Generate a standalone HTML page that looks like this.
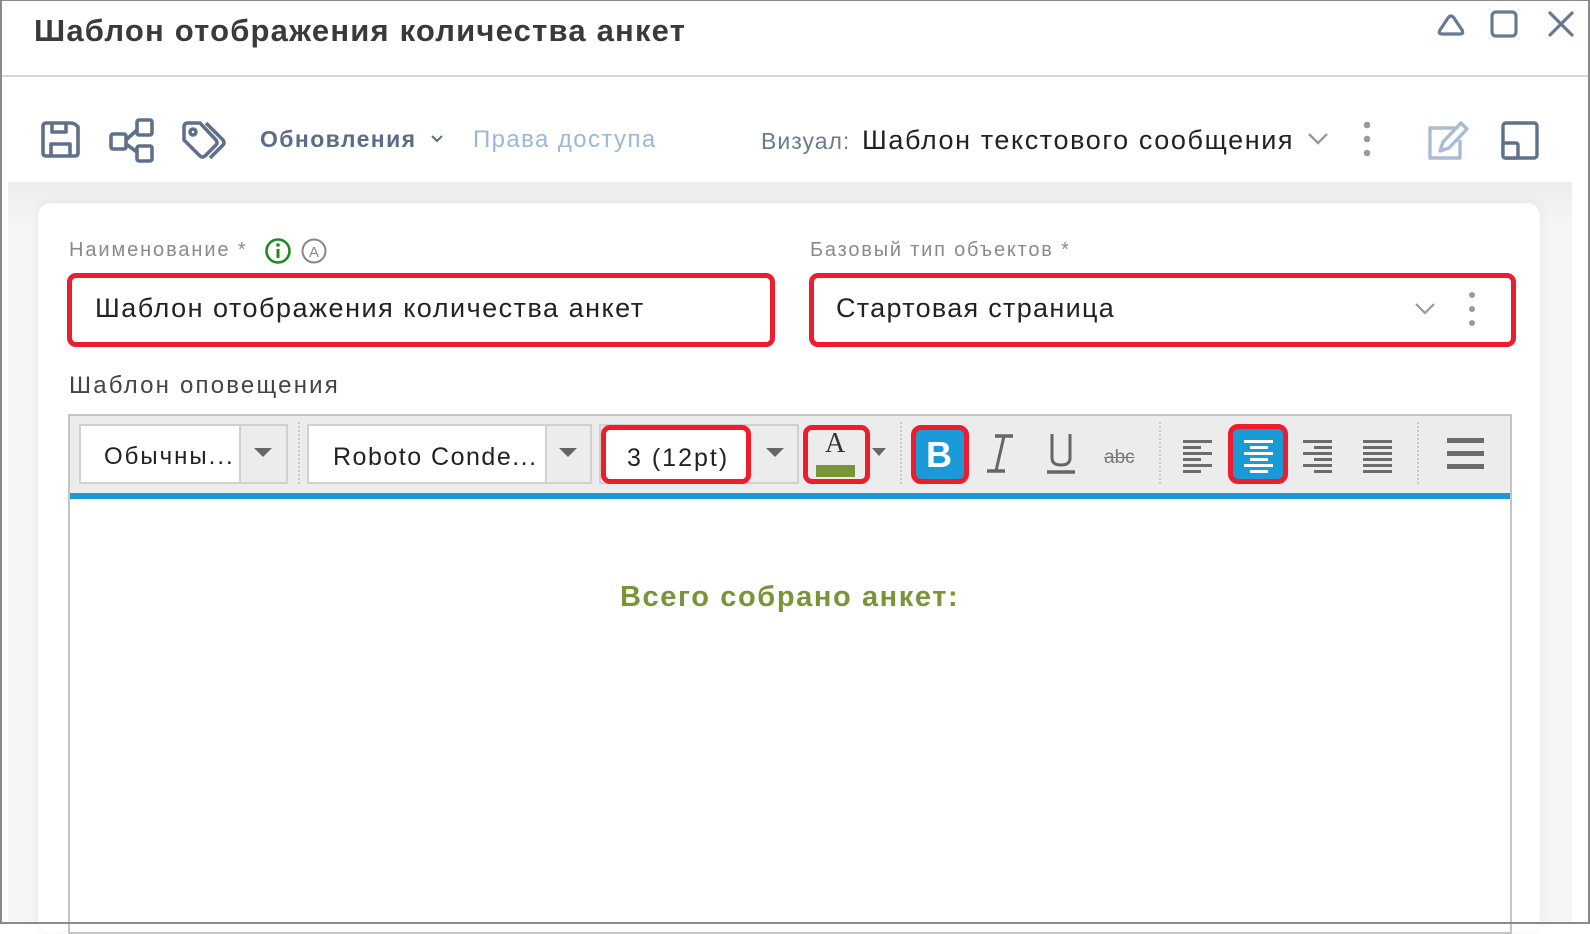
<!DOCTYPE html>
<html><head><meta charset="utf-8">
<style>
*{margin:0;padding:0;box-sizing:border-box}
body{width:1590px;height:924px;overflow:hidden;background:#fff;font-family:"Liberation Sans",sans-serif;position:relative}
.a{position:absolute}
.t{position:absolute;white-space:nowrap;line-height:1}
.frame{left:0;top:0;width:1590px;height:924px;border:2px solid #8a8a8a;border-top:1px solid #8a8a8a}
.rb{position:absolute;border:5px solid #ee1c2d;border-radius:9px}
.ln{position:absolute;height:3px;background:#6b6b6b}
.wl{position:absolute;height:3px;background:#fff}
</style></head><body>
<div class="t" style="left:34px;top:15px;font-size:31px;font-weight:bold;color:#3a3a3a;letter-spacing:1.2px">Шаблон отображения количества анкет</div>
<svg class="a" style="left:1430px;top:8px" width="150" height="34" viewBox="0 0 150 34" fill="none" stroke="#667a92" stroke-width="3.2" stroke-linecap="round" stroke-linejoin="round">
<path d="M12 26 L30 26 Q34 26 32 22 L24 10 Q21 6 18 10 L10 22 Q8 26 12 26Z"/>
<rect x="62" y="4" width="24" height="24" rx="4"/>
<path d="M120 5 L142 27 M142 5 L120 27"/>
</svg>
<div class="a" style="left:0;top:75px;width:1590px;height:2px;background:#cdd8e2"></div>
<svg class="a" style="left:38px;top:118px" width="195" height="46" viewBox="0 0 195 46" fill="none" stroke="#5f7189" stroke-width="3.6" stroke-linejoin="round">
<path d="M5 8 Q5 5 8 5 L32 5 Q37 5 40 9 L40 35 Q40 38 37 38 L8 38 Q5 38 5 35Z"/>
<path d="M14 5 L14 14 L28 14 L28 5"/>
<path d="M13 38 L13 26 L32 26 L32 38"/>
<rect x="73" y="16" width="15" height="15" rx="2"/>
<rect x="99" y="2" width="15" height="15" rx="2"/>
<rect x="99" y="28" width="15" height="15" rx="2"/>
<path d="M88 22 L99 12 M88 26 L99 34"/>
<path d="M146 9 Q146 5 150 5 L162 5 L178 22 Q180 25 178 27 L167 38 Q164 40 162 38 L146 22Z"/>
<circle cx="155" cy="14" r="3"/>
<path d="M168 5 L185 22 Q187 25 185 27 L172 40"/>
</svg>
<div class="t" style="left:260px;top:128px;font-size:23px;font-weight:bold;color:#5b6d84;letter-spacing:1.4px">Обновления</div>
<svg class="a" style="left:430px;top:134px" width="14" height="10" viewBox="0 0 14 10" fill="none" stroke="#5b6d84" stroke-width="2"><path d="M2 2 L7 7 L12 2"/></svg>
<div class="t" style="left:473px;top:128px;font-size:24px;color:#9db8d6;letter-spacing:1.4px">Права доступа</div>
<div class="t" style="left:761px;top:130px;font-size:23px;color:#6b7a8e;letter-spacing:1px">Визуал:</div>
<div class="t" style="left:862px;top:127px;font-size:27px;color:#222;letter-spacing:1.6px">Шаблон текстового сообщения</div>
<svg class="a" style="left:1306px;top:131px" width="24" height="16" viewBox="0 0 24 16" fill="none" stroke="#999" stroke-width="2.4"><path d="M3 3 L12 12 L21 3"/></svg>
<svg class="a" style="left:1362px;top:120px" width="10" height="40"><circle cx="5" cy="5" r="3.3" fill="#9a9a9a"/><circle cx="5" cy="19" r="3.3" fill="#9a9a9a"/><circle cx="5" cy="33" r="3.3" fill="#9a9a9a"/></svg>
<svg class="a" style="left:1425px;top:118px" width="46" height="44" viewBox="0 0 46 44" fill="none" stroke="#a9bcd2" stroke-width="3.4" stroke-linejoin="round">
<path d="M30 10 L5 10 L5 40 L35 40 L35 22"/>
<path d="M36 5 L42 11 L24 30 L15 33 L18 24Z"/>
</svg>
<svg class="a" style="left:1500px;top:120px" width="42" height="42" viewBox="0 0 42 42" fill="none" stroke="#5f7189" stroke-width="3.4" stroke-linejoin="round">
<rect x="3" y="3" width="34" height="35" rx="3"/>
<rect x="3" y="23" width="15" height="15" rx="2" fill="#fff"/>
</svg>
<div class="a" style="left:8px;top:182px;width:1564px;height:742px;background:linear-gradient(#ececed,#f5f5f6 40px)"></div>
<div class="a" style="left:38px;top:203px;width:1502px;height:730px;background:#fff;border-radius:13px;box-shadow:0 0 12px rgba(0,0,0,0.06)"></div>
<div class="t" style="left:69px;top:240px;font-size:20px;color:#8a8a8a;letter-spacing:1.9px">Наименование *</div>
<svg class="a" style="left:264px;top:237px" width="66" height="28" viewBox="0 0 66 28" fill="none">
<circle cx="14" cy="14" r="11.5" stroke="#1c8a22" stroke-width="2.6"/>
<path d="M14 12 L14 21" stroke="#1c8a22" stroke-width="3"/><circle cx="14" cy="8" r="1.8" fill="#1c8a22"/>
<circle cx="50" cy="14" r="11.5" stroke="#888" stroke-width="2"/>
<text x="50" y="20" font-size="15" text-anchor="middle" fill="#888" font-family="Liberation Sans">A</text>
</svg>
<div class="rb" style="left:67px;top:273px;width:708px;height:74px"></div>
<div class="t" style="left:95px;top:295px;font-size:27px;color:#222;letter-spacing:1.5px">Шаблон отображения количества анкет</div>
<div class="t" style="left:810px;top:240px;font-size:20px;color:#8a8a8a;letter-spacing:1.8px">Базовый тип объектов *</div>
<div class="rb" style="left:809px;top:273px;width:707px;height:74px"></div>
<div class="t" style="left:836px;top:295px;font-size:27px;color:#222;letter-spacing:1.3px">Стартовая страница</div>
<svg class="a" style="left:1413px;top:302px" width="24" height="14" viewBox="0 0 24 14" fill="none" stroke="#999" stroke-width="2.2"><path d="M3 2 L12 11 L21 2"/></svg>
<svg class="a" style="left:1467px;top:291px" width="10" height="38"><circle cx="5" cy="4" r="3" fill="#9a9a9a"/><circle cx="5" cy="18" r="3" fill="#9a9a9a"/><circle cx="5" cy="32" r="3" fill="#9a9a9a"/></svg>
<div class="t" style="left:69px;top:374px;font-size:24px;color:#444;letter-spacing:2.2px">Шаблон оповещения</div>
<div class="a" style="left:68px;top:414px;width:1444px;height:520px;border:2px solid #c4c4c4;background:#fff"></div>
<div class="a" style="left:70px;top:416px;width:1440px;height:77px;background:#ececec"></div>
<div class="a" style="left:70px;top:493px;width:1440px;height:6px;background:#1a9ad6"></div>
<div class="a" style="left:79px;top:424px;width:209px;height:60px;background:#fff;border:2px solid #d0d0d0"></div>
<div class="a" style="left:239px;top:426px;width:47px;height:56px;background:#ececec;border-left:2px solid #d0d0d0"></div>
<div class="t" style="left:104px;top:445px;font-size:24px;color:#222;letter-spacing:2px">Обычны...</div>
<svg class="a" style="left:254px;top:448px" width="18" height="10"><path d="M0 0 L18 0 L9 9Z" fill="#666"/></svg>
<div class="a" style="left:298px;top:422px;width:0;height:62px;border-left:2px dotted #c8c8c8"></div>
<div class="a" style="left:307px;top:424px;width:285px;height:60px;background:#fff;border:2px solid #d0d0d0"></div>
<div class="a" style="left:545px;top:426px;width:45px;height:56px;background:#ececec;border-left:2px solid #d0d0d0"></div>
<div class="t" style="left:333px;top:445px;font-size:25px;color:#222;letter-spacing:1.5px">Roboto Conde...</div>
<svg class="a" style="left:559px;top:448px" width="18" height="10"><path d="M0 0 L18 0 L9 9Z" fill="#666"/></svg>
<div class="a" style="left:599px;top:424px;width:200px;height:60px;background:#ececec;border:2px solid #d0d0d0"></div>
<div class="rb" style="left:601px;top:425px;width:150px;height:59px;background:#fff"></div>
<div class="t" style="left:627px;top:446px;font-size:25px;color:#222;letter-spacing:2px">3 (12pt)</div>
<svg class="a" style="left:766px;top:448px" width="18" height="10"><path d="M0 0 L18 0 L9 9Z" fill="#666"/></svg>
<div class="rb" style="left:803px;top:425px;width:67px;height:59px"></div>
<div class="t" style="left:825px;top:430px;font-size:28px;color:#333;font-family:'Liberation Serif',serif">A</div>
<div class="a" style="left:816px;top:465px;width:39px;height:12px;background:#7a943a"></div>
<svg class="a" style="left:872px;top:448px" width="14" height="10"><path d="M0 0 L14 0 L7 8Z" fill="#666"/></svg>
<div class="a" style="left:900px;top:422px;width:0;height:62px;border-left:2px dotted #c8c8c8"></div>
<div class="rb" style="left:911px;top:425px;width:58px;height:59px;background:#1a9ad6;border-radius:10px"></div>
<div class="t" style="left:926px;top:437px;font-size:36px;font-weight:bold;color:#fff">B</div>
<svg class="a" style="left:985px;top:432px" width="30" height="44" viewBox="0 0 30 44" fill="none" stroke="#666" stroke-width="3.5"><path d="M10 4 L28 4 M2 39 L20 39"/><path d="M19 4 L11 39" stroke-width="3"/></svg>
<svg class="a" style="left:1046px;top:432px" width="30" height="44" viewBox="0 0 30 44" fill="none" stroke="#666" stroke-width="3"><path d="M6 2 L6 26 Q6 33 15 33 Q24 33 24 26 L24 2"/><path d="M1 40 L29 40" stroke-width="3.5"/></svg>
<div class="t" style="left:1104px;top:448px;font-size:19px;color:#777;text-decoration:line-through">abc</div>
<div class="a" style="left:1159px;top:422px;width:0;height:62px;border-left:2px dotted #c8c8c8"></div>
<div class="ln" style="left:1183px;top:440px;width:29px"></div><div class="ln" style="left:1183px;top:446px;width:18px"></div>
<div class="ln" style="left:1183px;top:452px;width:29px"></div><div class="ln" style="left:1183px;top:458px;width:18px"></div>
<div class="ln" style="left:1183px;top:464px;width:29px"></div><div class="ln" style="left:1183px;top:470px;width:18px"></div>
<div class="rb" style="left:1228px;top:424px;width:60px;height:60px;background:#1a9ad6;border-radius:10px"></div>
<div class="wl" style="left:1244px;top:440px;width:29px"></div><div class="wl" style="left:1250px;top:446px;width:18px"></div>
<div class="wl" style="left:1244px;top:452px;width:29px"></div><div class="wl" style="left:1250px;top:458px;width:18px"></div>
<div class="wl" style="left:1244px;top:464px;width:29px"></div><div class="wl" style="left:1250px;top:470px;width:18px"></div>
<div class="ln" style="left:1303px;top:440px;width:29px"></div><div class="ln" style="left:1314px;top:446px;width:18px"></div>
<div class="ln" style="left:1303px;top:452px;width:29px"></div><div class="ln" style="left:1314px;top:458px;width:18px"></div>
<div class="ln" style="left:1303px;top:464px;width:29px"></div><div class="ln" style="left:1314px;top:470px;width:18px"></div>
<div class="ln" style="left:1363px;top:440px;width:29px"></div><div class="ln" style="left:1363px;top:446px;width:29px"></div>
<div class="ln" style="left:1363px;top:452px;width:29px"></div><div class="ln" style="left:1363px;top:458px;width:29px"></div>
<div class="ln" style="left:1363px;top:464px;width:29px"></div><div class="ln" style="left:1363px;top:470px;width:29px"></div>
<div class="a" style="left:1417px;top:422px;width:0;height:62px;border-left:2px dotted #c8c8c8"></div>
<div class="ln" style="left:1447px;top:438px;width:37px;height:5px"></div>
<div class="ln" style="left:1447px;top:451px;width:37px;height:5px"></div>
<div class="ln" style="left:1447px;top:464px;width:37px;height:5px"></div>
<div class="t" style="left:620px;top:583px;font-size:29px;font-weight:bold;color:#7a943a;letter-spacing:1.6px">Всего собрано анкет:</div>
<div class="a frame"></div>
</body></html>
